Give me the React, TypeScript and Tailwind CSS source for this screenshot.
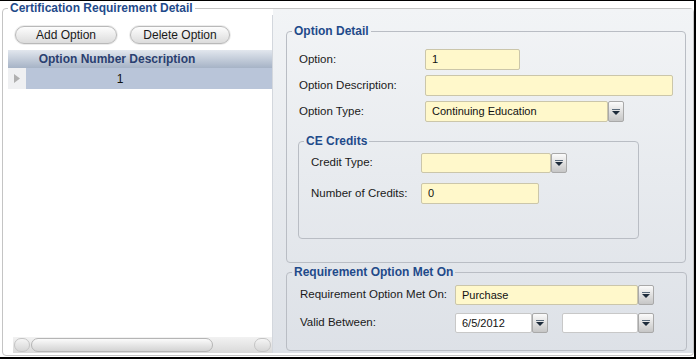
import React from "react";

const FONT = { fontFamily: '"Liberation Sans", Arial, sans-serif' };

function Arrow() {
  return (
    <svg width="8" height="6" viewBox="0 0 8 6">
      <rect x="0" y="0" width="8" height="1" fill="#5b6b7b" />
      <polygon points="0,2 8,2 4,6" fill="#1d2b3a" />
    </svg>
  );
}

function DropBtn() {
  return (
    <div className="w-[16px] h-full flex items-center justify-center border border-[#a9a9a9] rounded-[2px] bg-gradient-to-b from-[#fbfbfb] to-[#c6c6c6] shrink-0">
      <Arrow />
    </div>
  );
}

function Input({ w, value }: { w: string; value?: string }) {
  return (
    <div
      className={`${w} h-[21px] border border-[#cbc6aa] rounded-[2px] bg-[#fff8cb] flex items-center pl-[6px] text-[11px] text-[#111]`}
    >
      {value}
    </div>
  );
}

function Select({ w, value, white, h21 }: { w: string; value?: string; white?: boolean; h21?: boolean }) {
  return (
    <div className={`${w} ${h21 ? "h-[21px]" : "h-[20px]"} flex`}>
      <div
        className={`flex-1 h-full border rounded-[2px] ${white ? "bg-white border-[#c8c8c8]" : "bg-[#fff8cb] border-[#cbc6aa]"} flex items-center pl-[6px] text-[11px] text-[#111]`}
      >
        {value}
      </div>
      <DropBtn />
    </div>
  );
}

function Legend({ children }: { children: React.ReactNode }) {
  return (
    <legend className="ml-[5px] px-[2px] text-[12px] leading-[14px] font-bold text-[#1f4a8a]">{children}</legend>
  );
}

export default function App() {
  return (
    <div
      style={FONT}
      className="w-[696px] h-[359px] bg-white border-t border-t-black border-r-2 border-r-black border-b-2 border-b-black"
    >
      <fieldset className="ml-[2px] w-[692px] h-[355px] border border-[#c4c4c4] rounded-[4px] bg-white flex flex-col">
        <Legend>Certification Requirement Detail</Legend>
        <div className="flex flex-1 min-h-0 pb-[2px]">
          {/* left panel */}
          <div className="ml-[5px] w-[265px] flex flex-col border-r border-[#d3d7dd]">
            <div className="flex pt-[11px] pl-[7px] gap-[13px]">
              <button className="w-[102px] h-[18px] rounded-full border border-[#b9b9b9] bg-gradient-to-b from-[#fdfdfd] to-[#dcdcdc] text-[12px] leading-[16px] text-[#1a1a1a] shadow-[0_0_0_1px_#ececec]">
                Add Option
              </button>
              <button className="w-[100px] h-[18px] rounded-full border border-[#b9b9b9] bg-gradient-to-b from-[#fdfdfd] to-[#dcdcdc] text-[12px] leading-[16px] text-[#1a1a1a] shadow-[0_0_0_1px_#ececec]">
                Delete Option
              </button>
            </div>
            <div className="mt-[6px] h-[18px] bg-gradient-to-b from-[#e2e7ee] to-[#a6b3c6] flex items-center">
              <span className="w-[218px] text-center text-[12px] font-bold text-[#2a3f70]">
                Option Number Description
              </span>
            </div>
            <div className="h-[21px] flex">
              <div className="w-[18px] h-full bg-[#eff0f2] flex items-center pl-[6px]">
                <svg width="6" height="9" viewBox="0 0 6 9">
                  <polygon points="0,0 6,4.5 0,9" fill="#b0b0b0" />
                </svg>
              </div>
              <div className="flex-1 h-full bg-[#b9c5d9] flex items-center">
                <span className="w-[188px] text-center text-[12px] text-[#111]">1</span>
              </div>
            </div>
            <div className="flex-1" />
            <div className="ml-[5px] h-[16px] flex items-center bg-gradient-to-b from-[#f2f2f2] to-[#d9d9d9]">
              <div className="w-[16px] h-[14px] rounded-full border border-[#c4c4c4] bg-gradient-to-b from-[#f5f5f5] to-[#d6d6d6] ml-[1px]" />
              <div className="ml-[1px] w-[182px] h-[14px] rounded-full border border-[#b5b5b5] bg-gradient-to-b from-[#fbfbfb] to-[#d3d3d3]" />
              <div className="flex-1" />
              <div className="w-[17px] h-[14px] rounded-full border border-[#c4c4c4] bg-gradient-to-b from-[#f5f5f5] to-[#d6d6d6] mr-[1px]" />
            </div>
          </div>

          {/* right panel */}
          <div className="flex-1 -mt-[6px] bg-gradient-to-b from-[#f2f4f6] to-[#dde1e7] pl-[13px] flex flex-col">
            <fieldset className="mt-[15px] w-[400px] h-[239px] border border-[#b9bdc4] rounded-[4px]">
              <Legend>Option Detail</Legend>
              <div className="pl-[11px] pt-[11px] flex flex-col text-[11.5px] text-[#1a1a1a]">
                <div className="flex items-center h-[21px]">
                  <span className="w-[127px] pl-[1px]">Option:</span>
                  <Input w="w-[95px]" value="1" />
                </div>
                <div className="flex items-center h-[21px] mt-[5px]">
                  <span className="w-[127px] pl-[1px]">Option Description:</span>
                  <Input w="w-[248px]" />
                </div>
                <div className="flex items-center h-[21px] mt-[5px]">
                  <span className="w-[127px] pl-[1px]">Option Type:</span>
                  <Select w="w-[199px]" value="Continuing Education" h21 />
                </div>
                <fieldset className="mt-[12px] w-[341px] h-[105px] border border-[#b9bdc4] rounded-[4px]">
                  <Legend>CE Credits</Legend>
                  <div className="pl-[12px] pt-[5px] flex flex-col">
                    <div className="flex items-center h-[20px]">
                      <span className="w-[110px]">Credit Type:</span>
                      <Select w="w-[146px]" />
                    </div>
                    <div className="flex items-center h-[21px] mt-[10px]">
                      <span className="w-[110px]">Number of Credits:</span>
                      <Input w="w-[118px]" value="0" />
                    </div>
                  </div>
                </fieldset>
              </div>
            </fieldset>
            <fieldset className="mt-[2px] w-[401px] h-[86px] border border-[#b9bdc4] rounded-[4px]">
              <Legend>Requirement Option Met On</Legend>
              <div className="pl-[13px] pt-[6px] flex flex-col text-[11.5px] text-[#1a1a1a]">
                <div className="flex items-center h-[20px]">
                  <span className="w-[155px]">Requirement Option Met On:</span>
                  <Select w="w-[199px]" value="Purchase" />
                </div>
                <div className="flex items-center h-[20px] mt-[8px]">
                  <span className="w-[155px]">Valid Between:</span>
                  <Select w="w-[93px]" value="6/5/2012" white />
                  <div className="w-[14px]" />
                  <Select w="w-[92px]" white />
                </div>
              </div>
            </fieldset>
          </div>
        </div>
      </fieldset>
    </div>
  );
}
